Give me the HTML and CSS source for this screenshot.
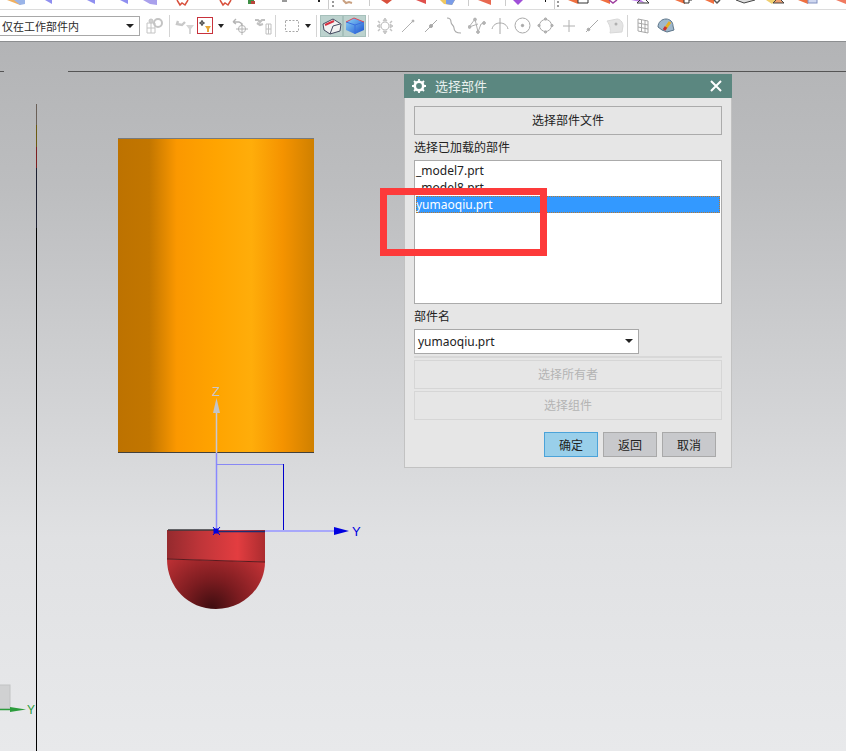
FILE: index.html
```html
<!DOCTYPE html>
<html lang="zh">
<head>
    <meta charset="UTF-8">
    <title>选择部件</title>
    <link rel="stylesheet" href="styles.css">
</head>
<body>
    <div class="ribbon">
        <svg class="ribbon-strip" width="846" height="9" viewBox="0 0 846 9">
            <polygon points="7,0 25,0 20,5" fill="#f0b060"/>
            <polygon points="14,0 25,0 25,4 20,5" fill="#9ab4e8"/>
            <polygon points="45,0 52,0 52,4" fill="#8f8ff0"/>
            <polygon points="87,0 95,0 95,4" fill="#8f8ff0"/>
            <polygon points="120,0 128,0 128,4" fill="#8f8ff0"/>
            <polygon points="143,0 157,0 157,5 150,4" fill="#a9a0ec"/>
            <path d="M177 0l3 5 2-2 3 2 3-5" fill="none" stroke="#d8503c" stroke-width="1.5"/>
            <path d="M220 0l3 5 2-2 3 2 3-5" fill="none" stroke="#d8503c" stroke-width="1.5"/>
            <rect x="248" y="0" width="6" height="4" fill="#3f8f45"/>
            <rect x="251" y="1" width="4" height="3" fill="#b9453a"/>
            <rect x="282" y="0" width="5" height="2" fill="#999"/>
            <rect x="318" y="0" width="2" height="2" fill="#222"/>
            <rect x="328" y="0" width="1" height="9" fill="#ccc"/>
            <rect x="332" y="1" width="2" height="2" fill="#999"/>
            <rect x="332" y="5" width="2" height="2" fill="#999"/>
            <path d="M343 0l3 3 3-1 3 1" fill="none" stroke="#c9a080" stroke-width="2"/>
            <rect x="369" y="0" width="1" height="6" fill="#ccc"/>
            <polygon points="381,0 392,0 387,4" fill="#d8503c"/>
            <polygon points="416,0 426,0 426,4" fill="#e0504c"/>
            <polygon points="440,0 455,0 452,5 444,4" fill="#f0c860"/>
            <polygon points="446,0 455,0 452,5 446,4" fill="#7a9ce8"/>
            <rect x="468" y="0" width="1" height="6" fill="#ccc"/>
            <polygon points="478,0 491,0 491,5" fill="#e86850"/>
            <rect x="505" y="0" width="1" height="6" fill="#ccc"/>
            <polygon points="513,0 523,0 518,5" fill="#a050d8"/>
            <rect x="545" y="0" width="1" height="2" fill="#111"/>
            <rect x="554" y="0" width="1" height="9" fill="#ccc"/>
            <rect x="557" y="1" width="2" height="2" fill="#999"/>
            <rect x="557" y="5" width="2" height="2" fill="#999"/>
            <polygon points="568,0 578,0 578,4" fill="#f07040"/>
            <path d="M578 0v3h10v-3" fill="#fff" stroke="#333"/>
            <polygon points="600,0 610,0 610,4" fill="#f07040"/>
            <path d="M609 0l4 3 4-3" fill="none" stroke="#a040a0" stroke-width="1.5"/>
            <polygon points="631,0 641,0 645,3" fill="#c080e8"/>
            <path d="M640 0l-3 3h12l-3-3" fill="none" stroke="#333"/>
            <polygon points="675,0 685,0 685,4" fill="#f07040"/>
            <path d="M684 0v3h5v-3h3" fill="#fff" stroke="#333"/>
            <polygon points="705,0 714,0 714,4" fill="#f07040"/>
            <path d="M714 0l3 3 3-3" fill="none" stroke="#555" stroke-width="1.5"/>
            <path d="M736 0l8 3 11-3" fill="#ddd" stroke="#444"/>
            <polygon points="766,0 776,0 772,4" fill="#f0d070"/>
            <path d="M776 0l-3 3h11l-3-3" fill="#f0a070" stroke="#444"/>
            <polygon points="798,0 808,0 808,4" fill="#f07040"/>
            <rect x="808" y="-1" width="9" height="4" fill="#d0d8f0" stroke="#8090c0"/>
            <polygon points="836,0 846,0 846,4" fill="#f07a60"/>
        </svg>
        <div class="toolbar">
            <div class="combo combo-filter">仅在工作部件内<span class="caret"></span></div>

            <span class="tool ml2">
                <svg width="18" height="18" viewBox="0 0 18 18" fill="none" stroke="#c4c4c4">
                    <path d="M2 6h8v10H2zM2 11h8M6 4v12"/>
                    <circle cx="13" cy="6" r="4" stroke-width="2"/>
                    <circle cx="6" cy="4" r="2" fill="#d0d0d0"/>
                </svg>
            </span>
            <span class="sep ml4 mr3"></span>

            <span class="tool">
                <svg width="20" height="18" viewBox="0 0 20 18">
                    <path d="M3 4l-1 3 5 1 3-3" fill="none" stroke="#c8c8c8" stroke-width="2.4"/>
                    <polygon points="11,8 19,8 16,12 16,17 14,17 14,12" fill="#d6d6d6"/>
                </svg>
            </span>
            <span class="tool tool-narrow">
                <svg width="16" height="17" viewBox="0 0 16 17">
                    <rect x="0.5" y="0.5" width="15" height="16" fill="#fff" stroke="#c8323c"/>
                    <path d="M5 3v6M2 6h6" stroke="#555" stroke-width="1.2"/>
                    <circle cx="5" cy="6" r="1.6" fill="none" stroke="#555"/>
                    <polygon points="8,9 14,9 12,12 12,15 10,15 10,12" fill="#e8a838"/>
                </svg>
            </span>
            <span class="arrow arrow-wide"></span>
            <span class="tool">
                <svg width="18" height="18" viewBox="0 0 18 18" fill="none" stroke="#b4b4b4">
                    <path d="M2 5l3-3M2 5h6a4 4 0 0 1 3 3M2 5l3 2" stroke-width="1.4"/>
                    <circle cx="11" cy="12" r="3.6"/>
                    <path d="M11 6v12M5 12h12"/>
                </svg>
            </span>
            <span class="tool">
                <svg width="18" height="18" viewBox="0 0 18 18" fill="none" stroke="#c0c0c0">
                    <path d="M1 3h3l2 2 2-2h3M3 6l3 2 3-1" stroke-width="2.2"/>
                    <path d="M12 7h5v10h-5zM12 12h5M14.5 7v10"/>
                </svg>
            </span>
            <span class="sep ml1 mr4"></span>

            <span class="tool">
                <svg width="16" height="16" viewBox="0 0 16 16" fill="none" stroke="#a8a8a8" stroke-dasharray="2 1.5">
                    <rect x="1.5" y="2.5" width="13" height="11"/>
                </svg>
            </span>
            <span class="arrow"></span>
            <span class="sep ml3 mr3"></span>

            <span class="tool tool-on">
                <svg width="20" height="18" viewBox="0 0 20 18">
                    <polygon points="1,7 11,2 19,7 18,14 8,17 2,13" fill="#f2f2f2" stroke="#444a60"/>
                    <path d="M3 8l9-4" stroke="#d83040" stroke-width="2"/>
                    <path d="M11 9l7-2M11 9l-3 8" stroke="#444a60" fill="none"/>
                </svg>
            </span>
            <span class="tool tool-on">
                <svg width="20" height="19" viewBox="0 0 20 19">
                    <defs>
                        <linearGradient id="cube" x1="0" y1="0" x2="1" y2="1">
                            <stop offset="0" stop-color="#8fd8f8"/>
                            <stop offset="1" stop-color="#1a50d0"/>
                        </linearGradient>
                    </defs>
                    <polygon points="1,6 9,2 19,6 19,14 10,18 1,14" fill="url(#cube)"/>
                    <path d="M1 6l9 3 9-3M10 9v9" stroke="#3a70e0" fill="none"/>
                    <path d="M1 6l8-4 10 4" stroke="#e04858" fill="none"/>
                </svg>
            </span>
            <span class="sep ml2 mr4"></span>

            <span class="tool">
                <svg width="18" height="18" viewBox="0 0 18 18" fill="none" stroke="#c4c4c4">
                    <circle cx="9" cy="9" r="4"/>
                    <path d="M9 1l2 3H7zM9 17l2-3H7zM1 9l3-2v4zM17 9l-3-2v4z" fill="#c8c8c8"/>
                    <path d="M2 4l2 2M16 4l-2 2M2 14l2-2M16 14l-2-2" stroke-width="1.5"/>
                </svg>
            </span>
            <span class="tool">
                <svg width="14" height="14" viewBox="0 0 14 14" fill="#b0b0b0" stroke="#b0b0b0">
                    <path d="M1 13L13 1"/><circle cx="12" cy="2" r="1"/>
                </svg>
            </span>
            <span class="tool">
                <svg width="14" height="14" viewBox="0 0 14 14" fill="#a8a8a8" stroke="#a8a8a8">
                    <path d="M1 13L13 1"/><circle cx="7" cy="7" r="1.5"/>
                </svg>
            </span>
            <span class="tool">
                <svg width="16" height="18" viewBox="0 0 16 18" fill="none" stroke="#a8a8a8" stroke-width="1.1">
                    <path d="M1 1c3 0 4 1 4 4s3 3 3 6 2 5 7 5"/>
                </svg>
            </span>
            <span class="tool">
                <svg width="18" height="18" viewBox="0 0 18 18" fill="none" stroke="#b0b0b0">
                    <path d="M1 10L7 2l3 13 3-8 4-1M1 10l9-3"/>
                    <g fill="#b8b8b8"><circle cx="7" cy="2.5" r="1.4"/><circle cx="1.5" cy="10" r="1.4"/><circle cx="10" cy="15" r="1.4"/><circle cx="16" cy="6" r="1.4"/></g>
                </svg>
            </span>
            <span class="tool">
                <svg width="18" height="18" viewBox="0 0 18 18" fill="none" stroke="#a8a8a8">
                    <path d="M1 12c1-4 4-6 8-6s7 2 8 6M9 1v16"/>
                </svg>
            </span>
            <span class="tool">
                <svg width="17" height="17" viewBox="0 0 17 17" fill="none" stroke="#a8a8a8">
                    <circle cx="8.5" cy="8.5" r="7.5"/><circle cx="8.5" cy="8.5" r="1.2" fill="#a8a8a8"/>
                </svg>
            </span>
            <span class="tool">
                <svg width="17" height="17" viewBox="0 0 17 17" fill="#b8b8b8" stroke="#a8a8a8">
                    <circle cx="8.5" cy="8.5" r="6" fill="none"/>
                    <circle cx="8.5" cy="2" r="1.1"/><circle cx="8.5" cy="15" r="1.1"/><circle cx="2" cy="8.5" r="1.1"/><circle cx="15" cy="8.5" r="1.1"/>
                </svg>
            </span>
            <span class="tool">
                <svg width="14" height="14" viewBox="0 0 14 14" stroke="#b0b0b0"><path d="M7 1v12M1 7h12"/></svg>
            </span>
            <span class="tool">
                <svg width="14" height="14" viewBox="0 0 14 14" fill="#a8a8a8" stroke="#a8a8a8">
                    <path d="M1 13L13 1"/><circle cx="3.5" cy="10.5" r="1.3"/>
                </svg>
            </span>
            <span class="tool">
                <svg width="18" height="16" viewBox="0 0 18 16">
                    <path d="M1 3l10-2c3 0 6 3 6 7l-1 6-12 1c1-3 0-8-3-12z" fill="#e4e4e4" stroke="#d8d8d8"/>
                    <circle cx="10" cy="6" r="1.5" fill="#b0b0b0"/>
                </svg>
            </span>
            <span class="sep ml1 mr3"></span>

            <span class="tool">
                <svg width="12" height="16" viewBox="0 0 12 16" fill="none" stroke="#a8a8a8">
                    <path d="M1 1l10 2v12L1 13zM1 5l10 2M1 9l10 2M4.5 2v12M8 2.5v12"/>
                </svg>
            </span>
            <span class="tool">
                <svg width="18" height="16" viewBox="0 0 18 16">
                    <path d="M1 9c0-5 4-8 8-8s7 3 7 7l1 4-7 2-5-2z" fill="#9fb8cc" stroke="#5c7488"/>
                    <path d="M8 11l5-7" stroke="#e8b020" stroke-width="3"/>
                    <path d="M7 12l2-3" stroke="#c83030" stroke-width="3"/>
                </svg>
            </span>
        </div>
    </div>

    <div class="viewport">
        <svg class="scene" width="846" height="709" viewBox="0 42 846 709">
            <defs>
                <linearGradient id="cyl" gradientUnits="userSpaceOnUse" x1="118" y1="0" x2="314" y2="0">
                    <stop offset="0" stop-color="#bd7200"/>
                    <stop offset="0.16" stop-color="#c27600"/>
                    <stop offset="0.3" stop-color="#fb9800"/>
                    <stop offset="0.5" stop-color="#ffa400"/>
                    <stop offset="0.68" stop-color="#ffad0a"/>
                    <stop offset="0.84" stop-color="#f59300"/>
                    <stop offset="1" stop-color="#cf8000"/>
                </linearGradient>
                <linearGradient id="cap" gradientUnits="userSpaceOnUse" x1="167" y1="0" x2="265" y2="0">
                    <stop offset="0" stop-color="#952a2e"/>
                    <stop offset="0.35" stop-color="#c03539"/>
                    <stop offset="0.72" stop-color="#e33d40"/>
                    <stop offset="1" stop-color="#ab2c2f"/>
                </linearGradient>
                <radialGradient id="dome" gradientUnits="userSpaceOnUse" cx="212" cy="608" r="72">
                    <stop offset="0" stop-color="#3e0d10"/>
                    <stop offset="0.4" stop-color="#7c1c20"/>
                    <stop offset="1" stop-color="#c93438"/>
                </radialGradient>
            </defs>

            <path d="M0 71.5h4M68 71.5h778" stroke="#555" fill="none"/>
            <path d="M36.5 104v21" stroke="#6a6058"/>
            <path d="M36.5 125v22" stroke="#6c5a10"/>
            <path d="M36.5 147v21" stroke="#7c1f20"/>
            <path d="M36.5 168v60" stroke="#1c2030"/>
            <path d="M36.5 228v523" stroke="#000"/>

            <rect x="118" y="138" width="196" height="315" fill="url(#cyl)"/>
            <path d="M118 138.5h196" stroke="#777a7c"/>
            <path d="M118 452.5h196" stroke="#43403a"/>

            <path d="M167 559c0 28 21 50 49 50s49-22 49-47z" fill="url(#dome)"/>
            <path d="M167 530h98v32l-98-3z" fill="url(#cap)"/>
            <path d="M167 559l98 3" stroke="#5a1a1e"/>
            <path d="M168 530h48" stroke="#3a3a3e" stroke-width="1.5"/>
            <path d="M216 531.5h49" stroke="#1c2c70" stroke-width="1.5"/>

            <path d="M216.5 413V453" stroke="#c8c8d4" stroke-width="1.5"/>
            <path d="M216.5 453V531" stroke="#8888ff" stroke-width="1.5"/>
            <polygon points="216.5,398 213,413 220,413" fill="#c2c4c8"/>
            <text x="216" y="396" class="axis-z">Z</text>
            <path d="M216 464.5h67" stroke="#8888f4"/>
            <path d="M283.5 464v67" stroke="#0000cc"/>
            <path d="M265 531h70" stroke="#a8a8fa" stroke-width="2"/>
            <polygon points="334,527 349,531 334,535" fill="#0000e0"/>
            <text x="352" y="536" class="axis-y">Y</text>
            <rect x="213.5" y="528.5" width="5" height="5" fill="#0000e0"/>
            <path d="M213 527l7 8M220 527l-7 8" stroke="#0000e0"/>

            <rect x="-1" y="685" width="11" height="24" fill="#d0d1d2" stroke="#c2c3c4"/>
            <path d="M0 709.5h14" stroke="#2c9c3c" stroke-width="1.5"/>
            <polygon points="10,707 26,709.5 10,712" fill="#2c9c3c"/>
            <text x="27" y="714" class="axis-g">Y</text>
        </svg>

        <div class="dialog">
            <div class="dialog-title">
                <svg class="gear" width="14" height="14" viewBox="0 0 14 14">
                    <circle cx="7" cy="7" r="4.2" fill="none" stroke="#fff" stroke-width="2.6"/>
                    <path d="M7 0v3M7 11v3M0 7h3M11 7h3M2 2l2 2M10 10l2 2M12 2l-2 2M4 10l-2 2" stroke="#fff" stroke-width="1.8"/>
                </svg>
                <span class="dialog-name">选择部件</span>
                <svg class="close" width="12" height="12" viewBox="0 0 12 12">
                    <path d="M1 1l10 10M11 1L1 11" stroke="#fff" stroke-width="2"/>
                </svg>
            </div>
            <div class="dialog-body">
                <div class="btn btn-wide">选择部件文件</div>
                <div class="label">选择已加载的部件</div>
                <div class="list">
                    <div class="row">_model7.prt</div>
                    <div class="row">_model8.prt</div>
                    <div class="row row-selected">yumaoqiu.prt</div>
                </div>
                <div class="label">部件名</div>
                <div class="combo combo-part">yumaoqiu.prt<span class="caret"></span></div>
                <div class="divider"></div>
                <div class="btn btn-wide btn-disabled">选择所有者</div>
                <div class="btn btn-wide btn-disabled">选择组件</div>
                <div class="actions">
                    <div class="btn btn-action btn-ok">确定</div>
                    <div class="btn btn-action">返回</div>
                    <div class="btn btn-action">取消</div>
                </div>
            </div>
        </div>

        <div class="callout"></div>
    </div>
</body>
</html>
```

FILE: styles.css
```css
body {
    margin: 0;
    width: 846px;
    height: 751px;
    overflow: hidden;
    display: flex;
    flex-direction: column;
    background: #fff;
    font-family: "Noto Sans CJK SC", "Noto Sans", sans-serif;
    font-size: 12px;
    color: #222;
}

.ribbon {
    height: 41px;
    background: #fff;
    border-bottom: 1px solid #8c8e90;
    flex: none;
}

.ribbon-strip {
    display: block;
    border-bottom: 1px solid #dcdcdc;
    filter: blur(0.4px);
}

.toolbar {
    display: flex;
    align-items: center;
    height: 31px;
}

.tool {
    width: 23px;
    height: 22px;
    flex: none;
    display: flex;
    align-items: center;
    justify-content: center;
}

.tool svg {
    filter: blur(0.4px);
}

.tool-narrow {
    width: 18px;
}

.tool-narrow svg {
    filter: none;
}

.tool-on {
    background: #bcd2ce;
    box-shadow: inset 0 0 0 1px #a6c0bb;
}

.sep {
    width: 1px;
    height: 22px;
    flex: none;
    background: #d4d4d4;
}

.ml1 { margin-left: 1px; }
.ml2 { margin-left: 2px; }
.ml3 { margin-left: 3px; }
.ml4 { margin-left: 4px; }
.mr3 { margin-right: 3px; }
.mr4 { margin-right: 4px; }

.arrow {
    width: 10px;
    height: 10px;
    flex: none;
    position: relative;
}

.arrow-wide {
    width: 14px;
}

.arrow::after {
    content: "";
    position: absolute;
    left: 50%;
    top: 3px;
    margin-left: -3px;
    border: 3px solid transparent;
    border-top: 4px solid #222;
    border-bottom: 0;
}

.combo {
    box-sizing: border-box;
    display: flex;
    align-items: center;
    background: #fff;
    border: 1px solid #a8a8a8;
    flex: none;
}

.combo-filter {
    width: 140px;
    height: 20px;
    padding-left: 2px;
    font-size: 11px;
    border-left: 0;
    color: #2a2a2a;
}

.combo-part {
    width: 225px;
    height: 25px;
    padding: 0 0 1px 3px;
    font-family: "Noto Sans", sans-serif;
}

.caret {
    margin-left: auto;
    margin-right: 5px;
    border: 4px solid transparent;
    border-top: 4px solid #222;
    border-bottom: 0;
}

.viewport {
    flex: 1;
    position: relative;
    background: linear-gradient(#b3b4b6, #bcbdbf 20%, #e0e1e3 70%, #e8e9eb);
}

.scene {
    position: absolute;
    left: 0;
    top: 0;
}

.axis-z, .axis-y, .axis-g {
    font-family: "Liberation Sans", sans-serif;
    font-size: 13px;
}

.axis-z {
    fill: #c6c8cc;
    text-anchor: middle;
}

.axis-y {
    fill: #0000e0;
}

.axis-g {
    fill: #2c9c3c;
    font-size: 12px;
}

.dialog {
    position: absolute;
    left: 404px;
    top: 32px;
    width: 328px;
}

.dialog-title {
    height: 24px;
    display: flex;
    align-items: center;
    padding: 0 10px 0 8px;
    background: #5b8780;
    color: #e8f0ee;
    font-size: 13px;
}

.dialog-name {
    margin: 0 0 1px 9px;
}

.close {
    margin-left: auto;
}

.dialog-body {
    box-sizing: border-box;
    height: 370px;
    padding: 8px 9px 0;
    background: #e6e6e6;
    border: 1px solid #c2c2c2;
    border-top: 0;
}

.btn {
    box-sizing: border-box;
    display: flex;
    align-items: center;
    justify-content: center;
    padding-bottom: 2px;
    border: 1px solid #ababab;
    background: #e6e6e6;
}

.btn-wide {
    height: 29px;
}

.btn-disabled {
    border-color: #d6d6d6;
    color: #b4b4b4;
    margin-bottom: 2px;
}

.label {
    height: 25px;
    line-height: 24px;
}

.list {
    box-sizing: border-box;
    height: 144px;
    padding: 1px;
    background: #fff;
    border: 1px solid #ababab;
    font-family: "Noto Sans", sans-serif;
}

.row {
    height: 17px;
    line-height: 17px;
}

.row-selected {
    background: #3399ff;
    color: #fff;
    outline: 1px dotted #b87830;
    outline-offset: -1px;
}

.divider {
    height: 2px;
    margin: 2px 0;
    background: #d8d8d8;
}

.actions {
    display: flex;
    justify-content: flex-end;
    gap: 5px;
    margin-top: 12px;
    padding-right: 6px;
}

.btn-action {
    width: 54px;
    height: 25px;
    padding-bottom: 0;
    background: #c8c9cc;
    border-color: #a9a9a9;
}

.btn-ok {
    background: #99cfea;
    border-color: #4ba3d9;
}

.callout {
    position: absolute;
    left: 380px;
    top: 146px;
    width: 167px;
    height: 68px;
    box-sizing: border-box;
    border: 7px solid #fd3a3a;
}
```
